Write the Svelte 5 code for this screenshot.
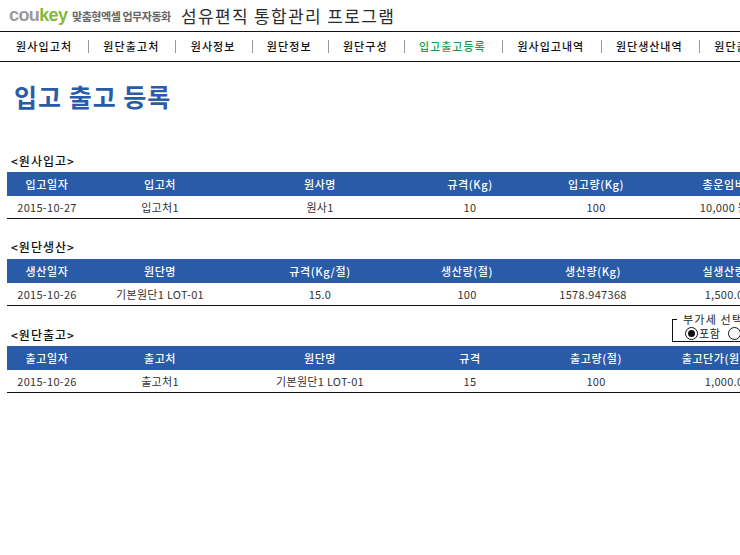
<script>
  const nav = ['원사입고처','원단출고처','원사정보','원단정보','원단구성','입고출고등록','원사입고내역','원단생산내역','원단출고내역'];
  const sections = [
    { title:'<원사입고>', kind:'a', head:['입고일자','입고처','원사명','규격(Kg)','입고량(Kg)','총운임비'], row:['2015-10-27','입고처1','원사1','10','100','10,000 원'] },
    { title:'<원단생산>', kind:'b', head:['생산일자','원단명','규격(Kg/절)','생산량(절)','생산량(Kg)','실생산량'], row:['2015-10-26','기본원단1 LOT-01','15.0','100','1578.947368','1,500.0'] },
    { title:'<원단출고>', kind:'c', head:['출고일자','출고처','원단명','규격','출고량(절)','출고단가(원)'], row:['2015-10-26','출고처1','기본원단1 LOT-01','15','100','1,000.0'], vat:true }
  ];
</script>

<div class="page">
  <header class="top">
    <div class="logo"><span class="cou">cou</span><span class="key">key</span></div>
    <div class="slogan">맞춤형엑셀 업무자동화</div>
    <div class="product">섬유편직 통합관리 프로그램</div>
  </header>

  <nav class="nav">
    {#each nav as item, i}
      <span class="navitem" class:active={i === 5}>{item}</span>
    {/each}
  </nav>

  <h1 class="title">입고 출고 등록</h1>

  {#each sections as s}
    <section class="section {s.kind}">
      <div class="label-row">
        <div class="label">{s.title}</div>
        {#if s.vat}
          <fieldset class="vat">
            <legend>부가세 선택</legend>
            <div class="choices">
              <span class="radio on"></span><span class="choice">포함</span>
              <span class="radio second"></span><span class="choice">별도</span>
            </div>
          </fieldset>
        {/if}
      </div>
      <div class="grid head">
        {#each s.head as h}<div>{h}</div>{/each}
      </div>
      <div class="grid body">
        {#each s.row as c}<div>{c}</div>{/each}
      </div>
    </section>
  {/each}
</div>

<style>
  :global(body) {
    margin: 0;
    background: #fff;
    overflow: hidden;
  }
  .page {
    width: 740px;
    height: 555px;
    overflow: hidden;
    font-family: "Noto Sans CJK KR", "Noto Sans", sans-serif;
    color: #222;
    font-size: 11px;
  }
  .top {
    display: flex;
    align-items: center;
    height: 31px;
    padding-left: 9px;
    border-bottom: 1px solid #111;
    white-space: nowrap;
  }
  .logo {
    font-family: "Liberation Sans", sans-serif;
    font-size: 18px;
    font-weight: bold;
    line-height: 31px;
    letter-spacing: -0.6px;
    width: 63px;
  }
  .cou { color: #9a9a9a; }
  .key { color: #86b83a; }
  .slogan {
    font-size: 11px;
    font-weight: 700;
    letter-spacing: -0.45px;
    color: #666;
    width: 109px;
  }
  .product {
    font-size: 17px;
    letter-spacing: 1.35px;
    color: #2b2b2b;
    font-weight: 400;
    line-height: 31px;
  }
  .nav {
    display: flex;
    align-items: center;
    height: 29px;
    border-bottom: 1px solid #111;
    padding-left: 16px;
    white-space: nowrap;
  }
  .navitem {
    flex: none;
    font-weight: 500;
    font-size: 11px;
    letter-spacing: 1.1px;
    color: #111;
    line-height: 13px;
    padding-right: 16px;
    margin-right: 14.225px;
    border-right: 1px solid #999;
  }
  .navitem:nth-child(n + 6) { letter-spacing: 1px; padding-right: 16.5px; }
  .navitem.active { color: #1c9a4c; }
  .title {
    margin: 0;
    padding: 17px 0 0 14px;
    height: 73px;
    box-sizing: content-box;
    font-size: 25px;
    line-height: 34px;
    letter-spacing: 1px;
    font-weight: 700;
    color: #2a5ba8;
  }
  .section {
    width: 800px;
    margin-left: 7px;
  }
  .section.b { margin-top: 20px; }
  .section.c { margin-top: 20px; }
  .label-row {
    display: flex;
    align-items: flex-end;
    justify-content: space-between;
    height: 20px;
    position: relative;
  }
  .label {
    padding-left: 4px;
    font-size: 12px;
    font-weight: 500;
    letter-spacing: 1px;
    line-height: 16px;
    margin-bottom: 4px;
    color: #111;
  }
  .a .label { margin-bottom: 3px; }
  .c .label { margin-bottom: 3px; }
  .vat {
    position: absolute;
    left: 665px;
    top: -12px;
    width: 120px;
    height: 28px;
    box-sizing: border-box;
    margin: 0;
    padding: 0 0 0 12px;
    border: 1px solid #111;
  }
  .vat legend {
    padding: 0 2px 0 6px;
    margin-left: -8px;
    font-size: 11px;
    line-height: 11px;
    letter-spacing: 1.2px;
    color: #222;
  }
  .choices {
    display: flex;
    align-items: center;
    height: 14px;
    margin-top: 1px;
  }
  .radio {
    width: 11px;
    height: 11px;
    flex: none;
    border: 1px solid #111;
    border-radius: 50%;
    background: #fff;
    position: relative;
    margin-right: 1px;
  }
  .radio.on::after {
    content: "";
    position: absolute;
    left: 2px;
    top: 2px;
    width: 7px;
    height: 7px;
    border-radius: 50%;
    background: #111;
  }
  .radio.second { margin-left: 8px; }
  .choice {
    font-size: 11px;
    letter-spacing: 0.6px;
    line-height: 14px;
  }
  .grid {
    display: grid;
    text-align: center;
    white-space: nowrap;
    align-items: center;
  }
  .a .grid { grid-template-columns: 80px 146px 174px 126px 126px 130px; }
  .b .grid { grid-template-columns: 80px 146px 174px 120px 132px 130px; }
  .c .grid { grid-template-columns: 80px 146px 174px 126px 126px 130px; }
  .c .head div:last-child { padding-right: 22px; }
  .head {
    height: 24px;
    background: #2a5ba8;
    color: #fff;
    font-weight: 500;
    font-size: 11px;
    letter-spacing: 0.6px;
  }
  .body {
    height: 21px;
    padding-bottom: 1px;
    border-bottom: 1px solid #111;
    color: #333;
    font-size: 11px;
    letter-spacing: 0.3px;
  }
</style>
